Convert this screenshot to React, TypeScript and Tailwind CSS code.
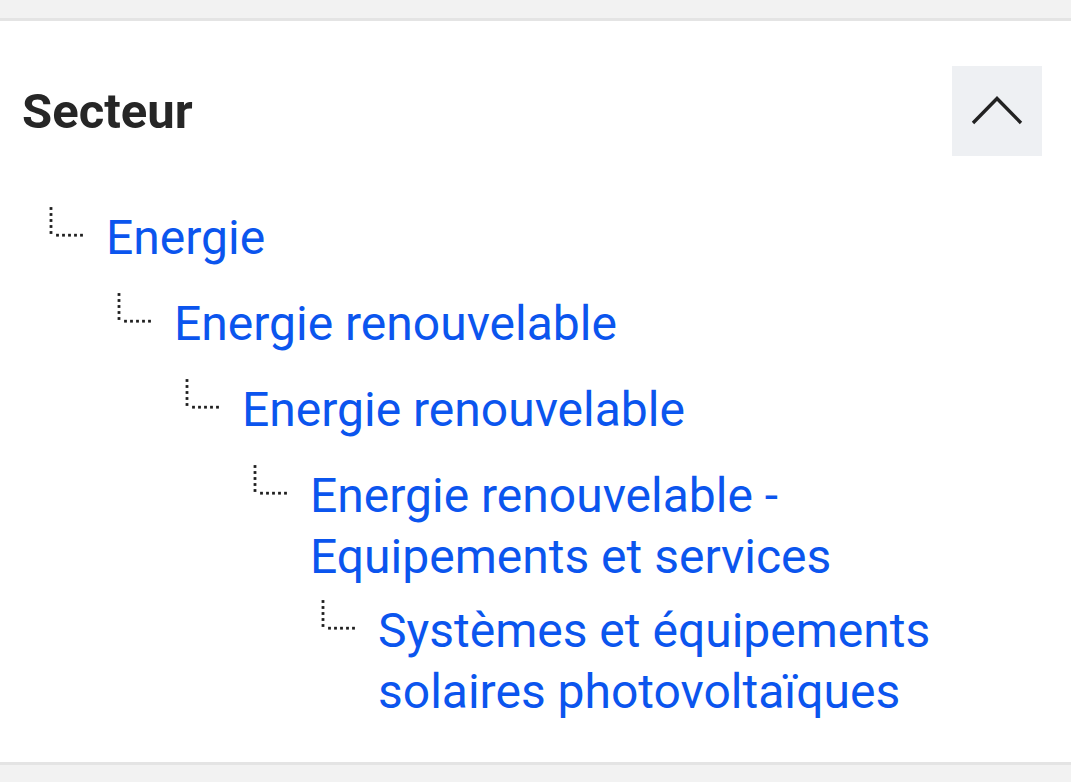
import React from 'react';

/* ── Données de l'arborescence ─────────────────────────────────── */
const sectors = [
  { label: 'Energie', level: 0 },
  { label: 'Energie renouvelable', level: 1 },
  { label: 'Energie renouvelable', level: 2 },
  { label: 'Energie renouvelable - Equipements et services', level: 3 },
  { label: 'Systèmes et équipements solaires photovoltaïques', level: 4 },
];

// décalage par niveau (68px) et espacement entre les lignes
const indent = ['pl-[49px]', 'pl-[117px]', 'pl-[185px]', 'pl-[253px]', 'pl-[321px]'];
const spacing = ['mt-0', 'mt-[25px]', 'mt-[25px]', 'mt-[25px]', 'mt-[13px]'];

/* ── Connecteur pointillé en L ─────────────────────────────────── */
function TreeConnector() {
  const vertical = [1.5, 7.5, 13.5, 19.5, 25.5];
  const horizontal = [8.5, 14.5, 20.5, 26.5, 32.5];
  return (
    <svg width="36" height="31" viewBox="0 0 36 31" className="shrink-0">
      {vertical.map((y) => (
        <rect key={`v${y}`} x="0.6" y={y - 1.4} width="2.8" height="2.8" fill="#1f1f1f" />
      ))}
      {horizontal.map((x) => (
        <rect key={`h${x}`} x={x - 1.4} y="26.8" width="2.8" height="2.8" fill="#1f1f1f" />
      ))}
    </svg>
  );
}

/* ── Bouton replier ────────────────────────────────────────────── */
function CollapseButton() {
  return (
    <button
      type="button"
      className="flex h-[90px] w-[90px] shrink-0 items-center justify-center bg-[#eef0f3]"
    >
      <svg width="90" height="90" viewBox="0 0 90 90">
        <polyline
          points="21,57 45,32.5 69,57"
          fill="none"
          stroke="#222"
          strokeWidth="3.4"
          strokeLinejoin="miter"
        />
      </svg>
    </button>
  );
}

/* ── Composant principal ───────────────────────────────────────── */
export default function App() {
  return (
    <div
      className="min-h-screen bg-[#f2f2f2] pt-[18px]"
      style={{ fontFamily: "Roboto, 'Liberation Sans', sans-serif" }}
    >
      <section className="border-y-[3px] border-[#e4e4e4] bg-white pb-[40px] pr-[29px]">
        {/* En-tête */}
        <div className="flex items-center justify-between pl-[22px] pt-[45px]">
          <h2 className="text-[49px] font-bold leading-none text-[#262626]">Secteur</h2>
          <CollapseButton />
        </div>

        {/* Arborescence */}
        <ul className="mt-[51px] flex flex-col">
          {sectors.map((s, i) => (
            <li key={i} className={`flex items-start ${indent[s.level]} ${spacing[i]}`}>
              <TreeConnector />
              <a
                href="#"
                className="ml-[21px] text-[48px] leading-[61px] text-[#0b55ee]"
              >
                {s.label}
              </a>
            </li>
          ))}
        </ul>
      </section>
    </div>
  );
}
